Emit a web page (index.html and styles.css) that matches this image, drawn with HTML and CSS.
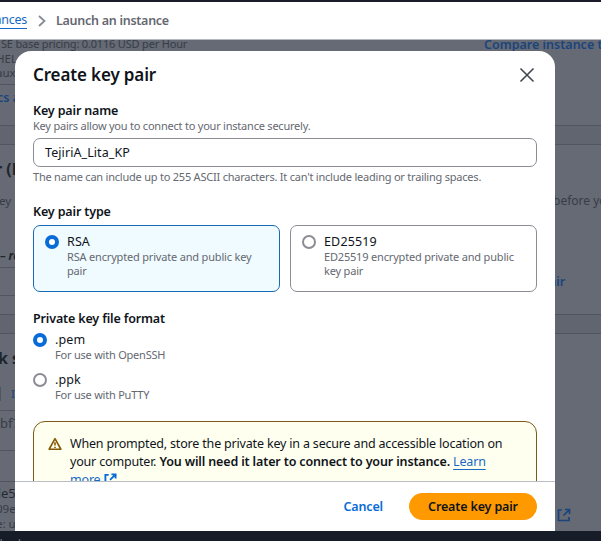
FILE: index.html
```html
<!DOCTYPE html>
<html lang="en">
<head>
<meta charset="utf-8">
<title>Create key pair</title>
<link rel="stylesheet" href="styles.css">
</head>
<body>
<div class="app">
  <div class="topline"></div>
  <nav class="crumbs"><a class="crumb-link">ances</a><svg class="chev" viewBox="0 0 8 12"><path d="M1 1l5.500 5L1 11"/></svg><span class="crumb-now">Launch an instance</span></nav>
  <main class="page">
    <div class="col left">
      <section class="panel p-type"><p class="sse">SE base pricing: 0.0116 USD per Hour</p><p>HEL</p><p>aux</p></section>
      <section class="panel p-link"><b class="blue">cs a</b></section>
      <section class="panel gap-a"></section>
      <section class="panel p-key"><h3>r (L</h3><p>ey</p><b class="req">– re</b></section>
      <section class="panel p-field"></section>
      <section class="panel p-end"></section>
      <section class="panel gap-b"></section>
      <section class="panel p-net"><h3>k se</h3><p class="info"><i></i>In</p></section>
      <section class="panel p-vpc"><p>bf7</p></section>
      <section class="panel p-mid"></section>
      <section class="panel p-sub"><p class="dark">de5</p><p>09e</p><p>e: u</p></section>
    </div>
    <div class="col right">
      <section class="panel p-compare"><span class="rule"></span><b class="blue">Compare instance types</b></section>
      <section class="panel gap-a"></section>
      <section class="panel p-before"><p>before you</p><b class="blue">air</b></section>
      <section class="panel gap-b"></section>
      <section class="panel p-rest"><svg class="ext" viewBox="0 0 14 14"><path d="M5 2H1.500v10.500H12V9M8 1.500h4.500V6M12.500 1.500L6.500 7.500"/></svg></section>
    </div>
  </main>
  <footer class="bottom">dback</footer>

  <div class="modal" role="dialog">
    <header class="head"><h2>Create key pair</h2><svg class="close" viewBox="0 0 16 16"><path d="M1.500 1.500l13 13M14.500 1.500l-13 13"/></svg></header>
    <div class="body">
      <label class="label l-name">Key pair name</label>
      <p class="desc d-name">Key pairs allow you to connect to your instance securely.</p>
      <div class="input">TejiriA_Lita_KP</div>
      <p class="desc hint">The name can include up to 255 ASCII characters. It can't include leading or trailing spaces.</p>
      <div class="label l-type">Key pair type</div>
      <div class="tiles">
        <div class="tile on"><span class="radio checked"></span><div><p class="opt">RSA</p><p class="desc">RSA encrypted private and public key<br>pair</p></div></div>
        <div class="tile"><span class="radio"></span><div><p class="opt ed">ED25519</p><p class="desc">ED25519 encrypted private and public<br>key pair</p></div></div>
      </div>
      <div class="label l-format">Private key file format</div>
      <div class="choice"><span class="radio checked"></span><div><p class="opt">.pem</p><p class="desc">For use with OpenSSH</p></div></div>
      <div class="choice"><span class="radio"></span><div><p class="opt">.ppk</p><p class="desc">For use with PuTTY</p></div></div>
      <div class="alert">
        <svg class="warn" viewBox="0 0 16 16"><path d="M8 1.800L14.700 14H1.300z"/><path d="M8 6v3.800M8 11v1.700"/></svg>
        <p><span>When prompted, store the private key in a secure and accessible location on</span><br><span>your computer. </span><b>You will need it later to connect to your instance.</b> <a>Learn</a><br><a>more</a> <svg class="ext" viewBox="0 0 14 14"><path d="M5 2H1.500v10.500H12V9M8 1.500h4.500V6M12.500 1.500L6.500 7.500"/></svg></p>
      </div>
    </div>
    <footer class="foot"><span class="cancel">Cancel</span><span class="create">Create key pair</span></footer>
  </div>
</div>
</body>
</html>
```
FILE: styles.css
```css
* { box-sizing: border-box; }
body, p, h2, h3 { margin: 0; }
body { font-family: "Noto Sans", "Open Sans", sans-serif; color: #0f141a; overflow: hidden; }
svg { fill: none; stroke: currentColor; }
.app { position: relative; width: 601px; height: 541px; overflow: hidden; display: flex; flex-direction: column; background: #656a74; }
.topline { height: 2px; background: #1a1d29; flex: none; }
.crumbs { height: 38px; flex: none; background: #fff; display: flex; align-items: center; font-size: 12.5px; border-bottom: 1px solid #b4b8bf; padding-bottom: 1px; }
.crumb-link { color: #1769c4; border-bottom: 1px solid #1769c4; line-height: 16px; width: 27px; display: flex; justify-content: flex-end; letter-spacing: -.25px; }
.chev { width: 8px; height: 12px; margin: 1px 10px 0 11px; stroke-width: 1.8; color: #858b94; }
.crumb-now { font-weight: 600; color: #656871; letter-spacing: -.27px; }

.page { flex: 1; min-height: 0; display: flex; overflow: hidden; white-space: nowrap; color: #373c47; font-size: 11.5px; line-height: 14px; }
.col { display: flex; flex-direction: column; }
.left { width: 455px; }
.right { width: 146px; }
.panel { flex: none; border-bottom: 1px solid #50555f; overflow: hidden; }
.blue { color: #1b447c; font-size: 12.5px; font-weight: 600; }
h3 { font-size: 16px; line-height: 22px; color: #20242d; }
.p-type { height: 45px; }
.p-type p { margin-left: -4px; }
.p-type .sse { margin: -3px 0 1px 1px; font-size: 11px; letter-spacing: -.18px; }
.p-link { height: 41px; padding-top: 6px; }
.p-link .blue { margin-left: -3px; }
.gap-a, .gap-b { height: 19px; background: #60656f; }
.p-key { height: 123px; padding-top: 13px; }
.p-key h3 { margin-left: -5px; }
.p-key p { margin: 14px 0 0 -1px; }
.req { display: block; margin-top: 41px; font-style: italic; color: #20242d; }
.p-field { height: 28px; }
.p-end { height: 19px; }
.p-net { height: 77px; padding-top: 13px; }
.p-net h3 { margin-left: -2px; }
.info { display: flex; gap: 10px; margin-top: 18px; color: #1b447c; }
.info i { width: 1px; height: 14px; background: #50555f; }
.p-vpc { height: 40px; padding-top: 5px; font-size: 13px; }
.p-mid { height: 31px; }
.p-sub { height: 50px; padding-top: 4px; border: 0; }
.p-sub p { margin-left: -4px; line-height: 15px; }
.p-sub .dark { font-size: 13px; color: #252a34; margin-left: -7px; }
.p-compare { height: 86px; display: flex; gap: 28px; }
.p-compare .rule { width: 1px; margin-left: 1px; background: #373c47; }
.p-compare .blue { margin-top: -2px; }
.p-before { height: 170px; padding: 49px 0 0 98px; }
.p-before p { font-size: 12px; margin-bottom: 67px; }
.p-before .blue { margin-left: -4px; }
.p-rest { height: 198px; padding: 174px 0 0 102px; border: 0; color: #1b447c; }
.ext { width: 14px; height: 14px; stroke-width: 1.7; }
.bottom { height: 10px; flex: none; background: #161d29; color: #73839b; font-size: 11px; line-height: 24px; overflow: hidden; text-indent: -7px; }

.modal { position: absolute; left: 15px; top: 51px; width: 540px; height: 480px; border-radius: 16px 16px 0 0; background: #fff; display: flex; flex-direction: column; overflow: hidden; white-space: nowrap; }
.head { display: flex; justify-content: space-between; padding: 12px 20px 0 18px; height: 52px; flex: none; }
h2 { font-size: 17px; line-height: 24px; font-weight: 600; letter-spacing: -.14px; }
.close { width: 16px; height: 16px; margin-top: 4px; color: #424650; stroke-width: 1.6; }
.body { height: 378px; flex: none; padding: 0 18px; overflow: hidden; }
.label { display: block; font-size: 12.5px; line-height: 16px; font-weight: 600; letter-spacing: -.15px; }
.desc { font-size: 11px; line-height: 14px; color: #656871; letter-spacing: -.22px; }
.tile .desc { letter-spacing: -.18px; }
.input { height: 29px; margin-top: 4px; border: 1px solid #8c8c94; border-radius: 7px; padding-left: 11px; font-size: 12.5px; line-height: 27px; letter-spacing: .08px; }
.d-name { margin-top: 0; height: 15px; }
.hint { margin-top: 3px; }
.l-type { margin-top: 20px; }
.tiles { display: grid; grid-template-columns: 1fr 1fr; gap: 10px; margin-top: 5px; }
.tile { height: 67px; border: 1px solid #8c8c94; border-radius: 7px; display: flex; gap: 8px; padding: 8px 0 0 11px; }
.on { border-color: #1769b5; background: #f0fbff; }
.radio { width: 14px; height: 14px; flex: none; border: 2px solid #8c8c94; border-radius: 50%; margin-top: 1px; background: #fff; }
.checked { border: 4px solid #076bd8; }
.opt { font-size: 12.5px; line-height: 16px; letter-spacing: .1px; }
.ed { letter-spacing: .15px; }
.l-format { margin-top: 19px; }
.choice { display: flex; gap: 8px; height: 30px; margin-top: 5px; }
.choice + .choice { margin-top: 10px; }
.alert { margin-top: 19px; height: 90px; border: 1px solid #7a5a14; border-radius: 12px; background: #fffff0; padding: 13px 0 0 14px; display: flex; gap: 8px; font-size: 12.5px; line-height: 18px; letter-spacing: -.18px; }
.alert b { font-weight: 600; letter-spacing: -.14px; }
.warn { width: 14px; height: 14px; margin-top: 2px; color: #855900; stroke-width: 1.8; stroke-linejoin: round; }
.alert a { color: #1769c4; text-decoration: underline; text-underline-offset: 3px; }
.alert .ext { width: 13px; height: 13px; color: #076bd8; vertical-align: -2px; stroke-width: 2; }
.foot { height: 50px; border-top: 1px solid #b9bdc8; display: flex; justify-content: flex-end; align-items: center; padding: 0 18px 1px 0; gap: 26px; font-size: 12.5px; font-weight: 600; letter-spacing: -.15px; }
.cancel { color: #076bd8; }
.create { width: 128px; height: 27px; line-height: 27px; border-radius: 14px; background: #ff9900; text-align: center; }
```
